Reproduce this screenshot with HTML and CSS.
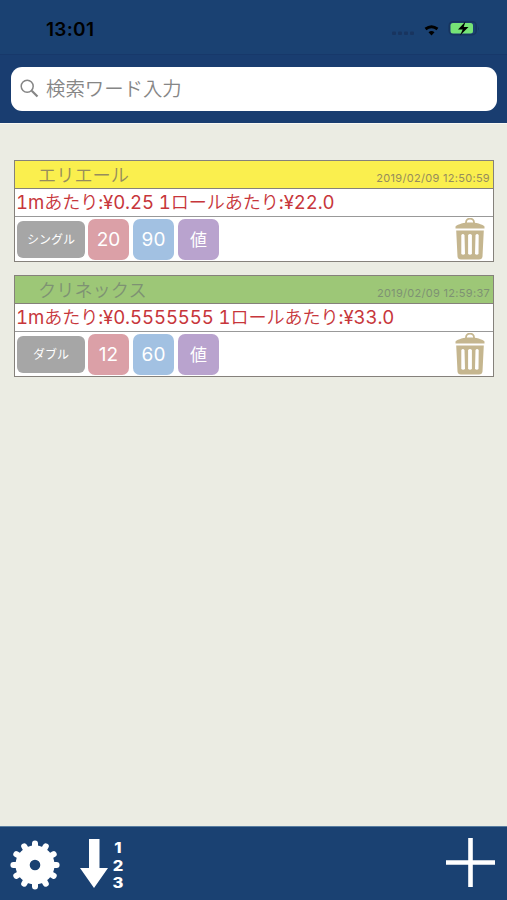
FILE: index.html
```html
<!DOCTYPE html>
<html lang="ja">
<head>
<meta charset="utf-8">
<title>一覧</title>
<link rel="stylesheet" href="styles.css">
</head>
<body>
<svg width="0" height="0" class="defs">
  <symbol id="trash" viewBox="0 0 30 42">
    <path d="M11 5.500V4.500a4 4 0 0 1 8 0v1" fill="none" stroke="currentColor" stroke-width="1.800"/>
    <path d="M.5 10.400V8.500C3 6 9 4.500 15 4.500S27 6 29.500 8.500V10.400z" fill="currentColor"/>
    <path fill-rule="evenodd" fill="currentColor" d="M1.200 12.500H28.800L27.500 38.500Q27.200 41.500 24 41.500H6Q2.800 41.500 2.500 38.500ZM6.300 17V36Q8 37.600 10 36L9.500 17Q7.900 15 6.300 17ZM13.100 17V36Q15 37.600 16.900 36V17Q15 15 13.100 17ZM20.500 17L20 36Q22 37.600 23.500 36L23.700 17Q22.100 15 20.500 17Z"/>
  </symbol>
</svg>
<div class="app">
  <header class="status">
    <span class="clock">13:01</span>
    <svg class="indicators" width="90" height="20" viewBox="0 0 90 20">
      <g fill="#18345f"><rect x="1" y="12.500" width="4" height="3.500" rx="1"/><rect x="7" y="12.500" width="4" height="3.500" rx="1"/><rect x="13" y="12.500" width="4" height="3.500" rx="1"/><rect x="19" y="12.500" width="4" height="3.500" rx="1"/></g>
      <path d="M34.500 10Q40.500 5.500 46.500 10" fill="none" stroke="#000" stroke-width="2.900"/>
      <path d="M37.500 13.200Q40.500 10.800 43.500 13.200L40.500 16.500z" fill="#000"/>
      <rect x="58.200" y="2.700" width="27" height="13" rx="4" fill="none" stroke="#17345f" stroke-width="1.500"/>
      <rect x="59.500" y="4" width="22.500" height="10.500" rx="2.500" fill="#76e476"/>
      <path d="M87 7.500v4q1.500-2 0-4" fill="#17345f"/>
      <path d="M74.500 2.500L67 10.500h4.700L69 16.500l8.500-8.500h-4.800z" fill="#000"/>
    </svg>
  </header>
  <div class="search">
    <div class="field">
      <svg width="20" height="20" viewBox="0 0 20 20" fill="none" stroke="#858585"><circle cx="7.200" cy="7.200" r="6" stroke-width="1.500"/><path d="M11.700 11.700L17.500 17.500" stroke-width="2.200"/></svg>
      <span class="placeholder">検索ワード入力</span>
    </div>
  </div>
  <main class="list">
    <article class="card">
      <div class="title yellow"><span class="name">エリエール</span><time>2019/02/09 12:50:59</time></div>
      <p class="price">1m<span class="ja">あたり</span>:¥0.25 1<span class="ja">ロールあたり</span>:¥22.0</p>
      <div class="details">
        <span class="tag kind">シングル</span><span class="tag rolls">20</span><span class="tag length">90</span><span class="tag value">値</span>
        <svg class="trash" width="30" height="42"><use href="#trash"/></svg>
      </div>
    </article>
    <article class="card">
      <div class="title green"><span class="name">クリネックス</span><time>2019/02/09 12:59:37</time></div>
      <p class="price">1m<span class="ja">あたり</span>:¥0.5555555 1<span class="ja">ロールあたり</span>:¥33.0</p>
      <div class="details">
        <span class="tag kind">ダブル</span><span class="tag rolls">12</span><span class="tag length">60</span><span class="tag value">値</span>
        <svg class="trash" width="30" height="42"><use href="#trash"/></svg>
      </div>
    </article>
  </main>
  <footer class="toolbar">
    <svg class="gear" width="50" height="50" viewBox="-25 -25 50 50">
      <circle r="12.400" fill="none" stroke="#fff" stroke-width="14.200"/>
      <g stroke="#fff" stroke-width="6" stroke-linecap="round">
        <path id="teeth" d="M0-17V-21.600M0 17V21.600M17 0H21.600M-17 0H-21.600"/>
        <use href="#teeth" transform="rotate(30)"/>
        <use href="#teeth" transform="rotate(60)"/>
      </g>
    </svg>
    <svg class="arrow" width="28" height="49" viewBox="0 0 28 49"><path d="M9 0H19.500V29H28L14 49L0 29H9z" fill="#fff"/></svg>
    <div class="digits"><span>1</span><span>2</span><span>3</span></div>
    <svg class="plus" width="49" height="49" viewBox="0 0 49 49"><path d="M24.500 0V49M0 24.500H49" stroke="#fff" stroke-width="4.600"/></svg>
  </footer>
</div>
</body>
</html>
```
FILE: styles.css
```css
* { box-sizing: border-box; }
body { margin: 0; font-family: Inter, "Noto Sans CJK JP", sans-serif; }
.defs { display: block; }
.app { width: 507px; height: 900px; display: flex; flex-direction: column; background: #ebece3; overflow: hidden; }
.status { height: 54px; flex: none; display: flex; justify-content: space-between; align-items: flex-start; padding: 19px 26px 0 46px; background: #1a4172; color: #000; }
.clock { font-size: 19px; line-height: 21px; font-weight: 600; letter-spacing: .3px; }
.search { height: 69px; flex: none; padding: 12px 10px 0 11px; background: #193d70; border-top: 1px solid #17386a; }
.field { height: 44px; border-radius: 11px; background: #fff; display: flex; align-items: center; gap: 6px; padding-left: 9px; }
.placeholder { color: #868686; font-size: 19.400px; font-weight: 350; line-height: 28px; }
.list { flex: 1; padding: 36px 13px 0 14px; display: flex; flex-direction: column; gap: 13px; border-top: 1px solid #f8f8f2; }
.card { height: 102px; flex: none; border: 1px solid #85817b; background: #fff; }
.title { height: 28px; display: flex; justify-content: space-between; padding: 0 3px 0 23px; border-bottom: 1px solid #85817b; white-space: nowrap; }
.yellow { background: #faef4e; color: #968c5c; }
.green { background: #9dc777; color: #7e9273; }
.name { font-size: 18.200px; font-weight: 350; line-height: 28px; }
time { font-size: 11px; line-height: 14px; padding-top: 10px; letter-spacing: .3px; }
.price { margin: 0; height: 28px; padding-left: 1px; border-bottom: 1px solid #999; color: #c7363b; font-size: 18.600px; line-height: 27px; font-weight: 400; font-variant-numeric: tabular-nums; letter-spacing: -.1px; white-space: nowrap; }
.ja { font-size: 18.100px; font-weight: 350; }
.details { height: 44px; display: flex; align-items: center; padding: 0 8px 0 2px; gap: 4px; }
.tag { height: 41px; width: 41px; border-radius: 7px; color: #fff; display: flex; align-items: center; justify-content: center; font-size: 19px; }
.kind { width: 68px; height: 37px; margin-right: -1px; padding-bottom: 1px; font-size: 12px; background: #a6a6a6; border-radius: 6px; }
.rolls { background: #dba0a7; }
.length { background: #a2c1e2; }
.value { background: #b9a3ce; font-size: 17px; padding-bottom: 2px; }
.trash { margin-left: auto; color: #c5b68f; }
.toolbar { height: 74px; flex: none; display: flex; align-items: flex-start; padding: 12px 12px 0 10px; background: #1a4172; border-top: 1px solid #597da0; color: #fff; }
.gear { margin-top: 1px; }
.arrow { margin-left: 20px; }
.digits { display: flex; flex-direction: column; margin-left: 4px; width: 12px; font: 800 14.400px/17.500px Inter, sans-serif; align-items: center; transform: scaleX(1.15); }
.plus { margin-left: auto; margin-top: -1px; }
```
